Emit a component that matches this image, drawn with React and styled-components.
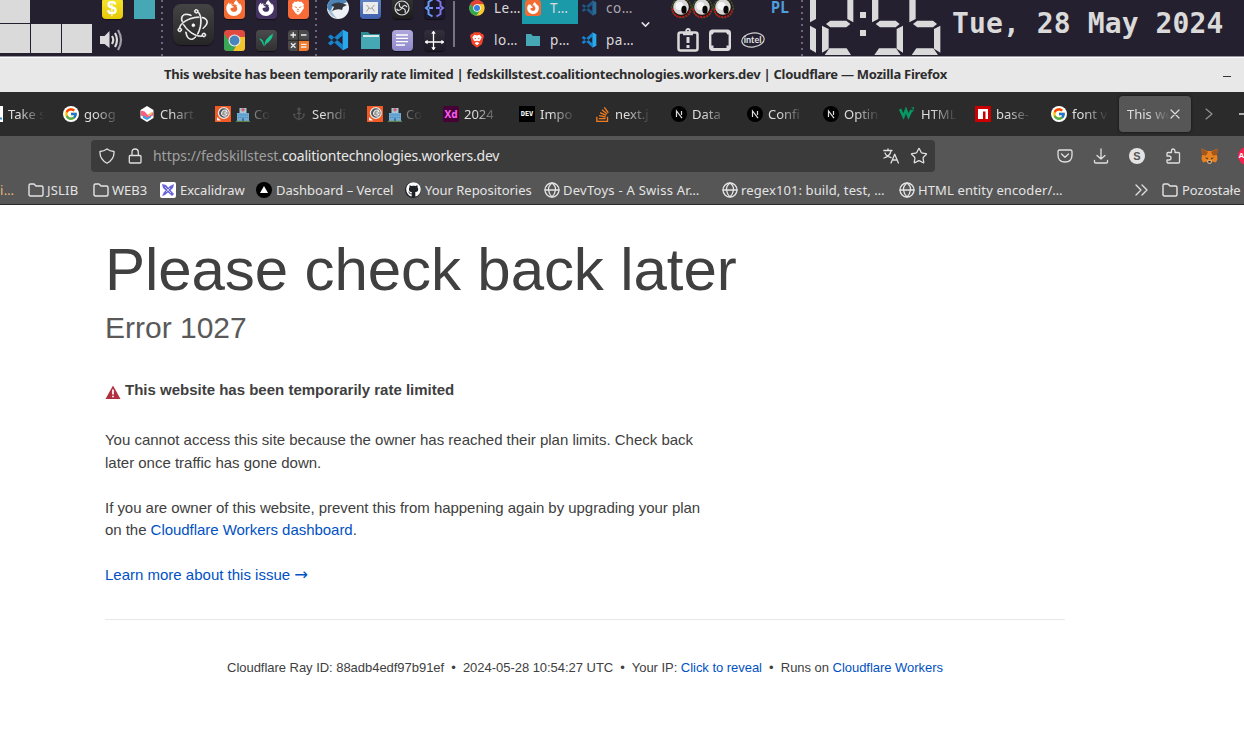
import React from "react";
import styled, { createGlobalStyle, css } from "styled-components";
import { ChevronDown, Anchor, Star } from "lucide-react";
import { FcGoogle } from "react-icons/fc";
import { SiElectron, SiFirefoxbrowser, SiStackoverflow } from "react-icons/si";
import { FaGithub } from "react-icons/fa";

const Global = createGlobalStyle`
  * { box-sizing: border-box; }
  body { margin: 0; background: #fff; overflow: hidden; }
  svg { display: block; flex: none; }
`;

const ui = '"Noto Sans", "Open Sans", sans-serif';

const Screen = styled.div`
  width: 1244px;
  height: 742px;
  overflow: hidden;
  background: #fff;
  font-family: ${ui};
`;

/* ---------- desktop panel ---------- */
const Panel = styled.header`
  display: flex;
  height: 56px;
  overflow: hidden;
  background: #252030;
`;
const Pager = styled.div`
  display: grid;
  grid-template-columns: 30px 30px 30px;
  grid-template-rows: 23px 29px;
  gap: 1px;
  width: 92px;
`;
const Desk = styled.i`
  background: ${(p) => (p.$on ? "#dadada" : "transparent")};
`;
const IconGrid = styled.div`
  display: grid;
  grid-template-columns: repeat(${(p) => p.$cols}, 32px);
  grid-template-rows: 32px 32px;
  place-items: center;
  margin-top: -8px;
  margin-left: ${(p) => p.$left || 0}px;
  height: 64px;
`;
const Grip = styled.i`
  width: 2px;
  height: 56px;
  margin-left: ${(p) => p.$left}px;
  background: repeating-linear-gradient(#6b6776 0 2px, transparent 2px 6px);
`;
const Divider = styled.i`
  width: 2px;
  height: 46px;
  margin: 1px 0 0 3px;
  background: #77737f;
`;
const Tile = styled.span`
  display: grid;
  place-items: center;
  width: ${(p) => p.$s || 21}px;
  height: ${(p) => p.$s || 21}px;
  border-radius: ${(p) => p.$r ?? 4}px;
  background: ${(p) => p.$bg};
  color: ${(p) => p.$c || "#fff"};
  box-shadow: ${(p) => (p.$flat ? "none" : "0 1px 1px #0008")};
  flex: none;
  font: ${(p) => p.$font || `bold 18px "Liberation Sans", sans-serif`};
`;
const Big = styled(Tile)`
  margin: 4px 0 0 10px;
  svg { transform: rotate(12deg); stroke: #fff; stroke-width: 0.5px; }
`;
const Tasks = styled.div`
  display: grid;
  grid-template-columns: repeat(3, 56px);
  grid-template-rows: 24px 32px;
  margin-left: 11px;
`;
const Task = styled.div`
  display: flex;
  align-items: center;
  gap: 9px;
  height: 32px;
  margin-top: ${(p) => (p.$top ? -8 : 0)}px;
  padding-left: 3px;
  background: ${(p) => (p.$active ? "#1b9aaa" : "none")};
  color: ${(p) => (p.$dim ? "#aaa7ad" : "#dadada")};
  font-size: 13.5px;
  letter-spacing: 0.5px;
  white-space: nowrap;
  svg { opacity: ${(p) => (p.$dim ? 0.55 : 1)}; }
`;
const PanelChevron = styled.div`
  display: grid;
  place-items: center;
  width: 22px;
  height: 48px;
  color: #e0e0e0;
`;
const Tray = styled.div`
  display: grid;
  grid-template-rows: 24px 32px;
  width: 132px;
  margin-left: 15px;
`;
const TrayRow = styled.div`
  display: flex;
  align-items: center;
  gap: ${(p) => p.$gap || 0}px;
  padding-left: ${(p) => p.$pad || 0}px;
`;
const Eyes = styled.div`
  display: flex;
  height: 32px;
  margin-top: -8px;
  align-items: center;
`;
const Lang = styled.span`
  margin: -8px 0 0 37px;
  font: bold 15px "DejaVu Sans Mono", monospace;
  color: #4f9fdc;
`;
const DateText = styled.time`
  margin-left: 11px;
  font: bold 28px/48px "DejaVu Sans Mono", monospace;
  letter-spacing: 0.11px;
  color: #dadada;
  white-space: pre;
`;

/* ---------- window title ---------- */
const TitleBar = styled.div`
  display: flex;
  align-items: center;
  height: 36px;
  padding-left: 164px;
  border-top: 1px solid #98949d;
  background: #e8e8e8;
  box-shadow: inset 0 1px #fbfbfb;
  color: #2d2d2d;
  font-size: 13px;
  font-weight: 700;
  white-space: nowrap;
`;
const TitleText = styled.span`
  width: 1059px;
  margin-top: -2px;
  letter-spacing: -0.272px;
`;
const Minimize = styled.i`
  width: 8px;
  height: 1px;
  margin-top: 4px;
  background: #333;
`;

/* ---------- tabs ---------- */
const TabStrip = styled.nav`
  display: flex;
  align-items: center;
  height: 44px;
  overflow: hidden;
  background: #2b2b2b;
  color: #dedede;
  font-size: 13px;
`;
const TabBox = styled.div`
  display: flex;
  align-items: center;
  flex: none;
  width: 76px;
  gap: 5px;
  &:first-child { margin-left: -13px; }
`;
const TabText = styled.span`
  width: ${(p) => p.$w || 35}px;
  margin-left: ${(p) => p.$ml || 0}px;
  overflow: hidden;
  white-space: nowrap;
  opacity: ${(p) => p.$o || 1};
  mask-image: linear-gradient(90deg, #000 ${(p) => p.$solid ?? 30}%, transparent 98%);
`;
const ActiveTab = styled.div`
  display: flex;
  align-items: center;
  flex: none;
  width: 72px;
  height: 36px;
  margin-left: -8px;
  padding-left: 8px;
  border-radius: 4px;
  background: #565656;
  box-shadow: 0 0 3px #0009;
`;
const TabControls = styled.div`
  display: flex;
  align-items: center;
  gap: 24px;
  margin-left: 12px;
  flex: none;
  svg:first-child { opacity: 0.6; }
`;

/* ---------- toolbar ---------- */
const Toolbar = styled.div`
  display: flex;
  align-items: center;
  height: 39px;
  background: #565656;
  color: #e0e0e0;
  overflow: hidden;
`;
const UrlBar = styled.div`
  display: flex;
  align-items: center;
  flex: none;
  width: 844px;
  height: 32px;
  margin-left: 91px;
  padding: 0 7px 0 8px;
  border-radius: 4px;
  background: #3b3b3b;
`;
const Url = styled.span`
  flex: 1;
  margin-left: 1px;
  font-size: 14px;
  letter-spacing: -0.22px;
  color: #e8e8e8;
  white-space: nowrap;
  span { color: #a0a0a0; letter-spacing: -0.03px; }
`;
const Tools = styled.div`
  display: flex;
  align-items: center;
  gap: 20px;
  margin-left: 122px;
`;
const Bookmarks = styled.div`
  display: flex;
  align-items: center;
  height: 30px;
  background: #565656;
  border-bottom: 1px solid #2a2a2a;
  color: #e4e4e4;
  overflow: hidden;
`;
const Mark = styled.div`
  display: flex;
  align-items: center;
  flex: none;
  gap: ${(p) => p.$gap ?? 4}px;
  width: ${(p) => p.$w}px;
  height: 28px;
  white-space: nowrap;
  font-size: 13px;
  letter-spacing: ${(p) => p.$ls || 0}px;
  ${(p) => p.$tint && css`color: #e9b77c;`}
`;

/* ---------- page ---------- */
const Page = styled.main`
  width: 960px;
  margin-left: 105px;
  padding-top: 35px;
  font-family: "Liberation Sans", Arial, sans-serif;
  font-size: 15px;
  line-height: 22.5px;
  color: #404040;
`;
const Headline = styled.h1`
  margin: 0;
  font-size: 60px;
  line-height: 60px;
  font-weight: 400;
  letter-spacing: -0.09px;
`;
const Sub = styled.h2`
  margin: 10px 0 32.5px;
  font-size: 30px;
  line-height: 36px;
  font-weight: 400;
  color: #595959;
`;
const Warning = styled.p`
  display: flex;
  gap: 4px;
  margin: 0;
  font-weight: 700;
  svg { margin-top: 6px; }
`;
const Para = styled.p`
  margin: ${(p) => p.$top || 22.5}px 0 0;
  white-space: nowrap;
  letter-spacing: ${(p) => p.$ls || 0}px;
`;
const Link = styled.a`
  color: #0051c3;
`;
const Arrow = styled.span`
  font-family: "DejaVu Sans", sans-serif;
  font-size: 16.5px;
  line-height: 1;
`;
const Footer = styled.footer`
  margin-top: 32.6px;
  padding-top: 37px;
  border-top: 1px solid #e8e8e8;
  text-align: center;
  font-size: 13px;
  letter-spacing: -0.035px;
  white-space: pre;
`;

/* ---------- drawings ---------- */
const VsCode = ({ s = 21 }) => (
  <svg width={s} height={s} viewBox="0 0 24 24">
    <path d="M17 1V7L4 18 1 15.5ZM17 23V17L4 6 1 8.5Z" fill="#1684cc" />
    <path d="M17 .5 23 3.5V20.5L17 23.5Z" fill="#2aa8ee" />
  </svg>
);
const LION = "M8 1.2 10 2 11.2 1.6 14 4.5 13.4 6 14 8 10.6 13 8 15 5.4 13 2 8 2.6 6 2 4.5 4.8 1.6 6 2Z";
const Lion = ({ s = 16, face = "#f36b32" }) => (
  <svg width={s} height={s} viewBox="0 0 16 16">
    <path d={LION} fill="#fff" />
    <path d="M4 6.2 7 7 6.4 8.2ZM12 6.2 9 7 9.6 8.2ZM7 9.5 8 8.5 9 9.5 8 10.5ZM5.5 10.6 8 12.2 10.5 10.6 8 11.4Z" fill={face} />
  </svg>
);
const BraveShield = () => (
  <svg width="16" height="16" viewBox="0 0 16 16">
    <path d="M5 .3H11L12.4 1.8 14 2 15 4.3 14.4 6 13 12 8 15.8 3 12 1.6 6 1 4.3 2 2 3.6 1.8Z" fill="#f4452a" />
    <path d="M8 3.4 10.5 2.8 12.7 5.2 11.7 7.5 10.4 9.3 8 8.7 5.6 9.3 4.3 7.5 3.3 5.2 5.5 2.8ZM8 9.8 10.4 11.3 8 13.3 5.6 11.3Z" fill="#fff" />
    <path d="M5 5.7 7.2 6.3 6.7 7.3ZM11 5.7 8.8 6.3 9.3 7.3Z" fill="#f4452a" />
  </svg>
);
const Folder = ({ s = 21 }) => (
  <svg width={s} height={s} viewBox="0 0 21 21">
    <path d="M1 2H8L10 4H20V18H1Z" fill="#2f8b94" />
    <path d="M3 5H19V8H3Z" fill="#d7eaea" />
    <path d="M1 7H20V19H1Z" fill="#46a8b5" />
  </svg>
);
const TaskFolder = () => (
  <svg width="16" height="16" viewBox="0 0 16 16">
    <path d="M1 2H6L8 4H15V14H1Z" fill="#46a8b5" />
  </svg>
);
const Chrome = ({ s = 18 }) => (
  <svg width={s} height={s} viewBox="0 0 24 24">
    <circle cx="12" cy="12" r="11.5" fill="#f9cb2e" />
    <path d="M2 6A11.5 11.5 0 0 1 22 6L12 6.5 7 15Z" fill="#e24335" />
    <path d="M2 6A11.5 11.5 0 0 0 11 23.5L17 15 12 17Z" fill="#34a853" />
    <circle cx="12" cy="12" r="5.6" fill="#fff" />
    <circle cx="12" cy="12" r="4.5" fill="#3d7ee0" />
  </svg>
);
const ChromeTile = () => (
  <svg width="21" height="21" viewBox="0 0 21 21">
    <rect width="21" height="21" rx="3.5" fill="#e14b3f" />
    <path d="M12 7H21V17.5Q21 21 17.5 21H9L14 13Z" fill="#f3c52c" />
    <path d="M0 4 7 13 13 14 9 21H3.5Q0 21 0 17.5Z" fill="#3aa757" />
    <circle cx="10.5" cy="10.5" r="6" fill="#eee" />
    <circle cx="10.5" cy="10.5" r="4.9" fill="#4a84bf" />
  </svg>
);
const Speaker = () => (
  <svg width="24" height="24" viewBox="0 0 24 24" fill="none" stroke="#dadada" strokeWidth="2.2">
    <path d="M0 8H4.5L9.5 3V20L4.5 16H0Z" fill="#dadada" stroke="none" />
    <path d="M12 8Q14.5 12 12 16M15 5Q19 12 15 19" />
    <path d="M18 2Q24 12 18 22" stroke="#a09da5" />
  </svg>
);
const Calculator = () => (
  <svg width="21" height="21" viewBox="0 0 21 21">
    <rect width="21" height="21" rx="3.5" fill="#4b4b4b" />
    <path d="M10.5 10.5H21V17.5Q21 21 17.5 21H10.5Z" fill="#f47a2b" />
    <path d="M0 10.3H21M10.3 0V21" stroke="#222" strokeWidth="1" />
    <path d="M2.5 5H8M5.2 2.2V7.8M13 5H18.5M3 13.2 7.5 17.7M7.5 13.2 3 17.7M13 14.3H18.5M13 17H18.5" stroke="#eee" strokeWidth="1.3" />
  </svg>
);
const Leaf = () => (
  <svg width="16" height="16" viewBox="0 0 16 16">
    <path d="M1 6.5Q5 6.5 5.8 11L5.6 14.5Q4 9 1 6.5Z" fill="#18c58f" />
    <path d="M6.3 14.5Q6 7 15 1.5Q14.5 8 8.5 11.5Z" fill="#18c58f" />
  </svg>
);
const Bird = () => (
  <svg width="22" height="22" viewBox="0 0 22 22">
    <circle cx="11" cy="11" r="11" fill="#eef2f6" />
    <path d="M0 11A11 11 0 0 1 20 5L16 7 6 9 3 15Z" fill="#4c83b4" />
    <path d="M4 8Q10 3 20 8L16 10 15 13Q11 11 5 14L7 10Z" fill="#34383e" />
    <path d="M1 14Q4 20 10 21Q5 17 5 13Z" fill="#a9bfd4" />
  </svg>
);
const Envelope = () => (
  <svg width="15" height="12" viewBox="0 0 15 12">
    <rect width="15" height="12" fill="#ececec" />
    <path d="M3.5 3 7.5 7 11.5 3M3.5 9.5 6 6M11.5 9.5 9 6" stroke="#999" fill="none" />
  </svg>
);
const Obs = () => (
  <svg width="16" height="16" viewBox="0 0 16 16" fill="none" stroke="#dedede" strokeWidth="1.2">
    <circle cx="8" cy="8" r="7" />
    <path d="M5.5 3Q4.5 7 8 8Q10 3.5 13 7M8 8Q12.5 9 11 13M8 8Q5 12 2.5 9" />
  </svg>
);
const Braces = () => (
  <svg width="21" height="20" viewBox="0 0 21 20" fill="none" strokeWidth="2">
    <path d="M8.5 1.5 4.5 4V8L2 10 4.5 12V16L8.5 18.5M5 10H9" stroke="#6a9bf5" />
    <path d="M12.5 1.5 16.5 4V8L19 10 16.5 12V16L12.5 18.5M12 10H16" stroke="#7a77ea" />
  </svg>
);
const Lines = () => (
  <svg width="14" height="12" viewBox="0 0 14 12" stroke="#fff" strokeWidth="1.3">
    <path d="M1 1H13M1 4.3H13M1 7.6H13M1 11H10" />
  </svg>
);
const Axes = () => (
  <svg width="19" height="19" viewBox="0 0 19 19" stroke="#fff" strokeWidth="1.3" fill="#fff">
    <path d="M8.5 1V18M1 11H18" />
    <path d="M7.5 2 8.5.5 9.5 2ZM7.5 17 8.5 18.5 9.5 17ZM2 10 .5 11 2 12ZM17 10 18.5 11 17 12Z" />
  </svg>
);
const Eye = () => (
  <svg width="21" height="21" viewBox="0 0 21 21">
    <circle cx="10.5" cy="10" r="9.7" fill="#2a160f" stroke="#3c6728" strokeWidth="1.2" strokeDasharray="2 1" />
    <path d="M1.5 10Q2 19 10 19Q18 19 19.5 11" fill="none" stroke="#bd1424" strokeWidth="1.8" strokeDasharray="2 1" />
    <circle cx="10" cy="9" r="7.8" fill="#d6d6d6" />
    <circle cx="8.5" cy="8" r="4" fill="#f6f6f6" />
    <ellipse cx="13" cy="11.8" rx="2.6" ry="4" fill="#050505" />
  </svg>
);
const Clipboard = () => (
  <svg width="22" height="24" viewBox="0 0 22 24" fill="none" stroke="#dadada" strokeWidth="2.5">
    <rect x="1.5" y="4.5" width="19" height="18" rx="2" />
    <circle cx="11" cy="2.8" r="1.8" strokeWidth="1.8" />
    <path d="M6 6H16" />
    <path d="M11 9V15M11 17V20" strokeWidth="3" />
  </svg>
);
const Frame = () => (
  <svg width="22" height="22" viewBox="0 0 22 22">
    <rect x="1.2" y="1.7" width="19.6" height="19" rx="2.4" fill="none" stroke="#dadada" strokeWidth="2.4" />
    <path d="M2 2H20V5.5H18.5L17 3.5H5L3.5 5.5H2ZM2 20V16.5H4.5V19H17.5V16.5H20V20Z" fill="#dadada" />
  </svg>
);
const Intel = () => (
  <svg width="24" height="18" viewBox="0 0 24 18">
    <ellipse cx="12" cy="9" rx="11.2" ry="7" fill="none" stroke="#cfcfcf" strokeWidth="1.2" transform="rotate(-8 12 9)" />
    <text x="2.8" y="12" fontSize="9" fontWeight="700" fill="#e4e4e4" fontFamily="Lato, sans-serif">intel</text>
  </svg>
);
const Segments = () => (
  <svg width="131" height="56" viewBox="480 0 393 168" style={{ marginLeft: 7 }} fill="#dadada">
    <path d="M480 0H498V57L480 67ZM480 77 498 87V158L480 148Z" />
    <path d="M592 0H610V67L592 57ZM528 72 541 62H589L601 72 589 82H541ZM516 77 536 87V146L516 158ZM538 145H590L603 165H524Z" />
    <path d="M630 36H648V54H630ZM630 90H648V108H630Z" />
    <path d="M666 0H685V57L666 67ZM677 72 690 62H737L749 72 737 82H690ZM740 87 759 77V158L740 146ZM687 145H738L752 165H673Z" />
    <path d="M778 0H797V57L778 67ZM789 72 802 62H849L861 72 849 82H802ZM852 87 871 77V158L852 146ZM799 145H850L864 165H785Z" />
  </svg>
);

const Line = ({ w = 16, h = w, d, sw = 1.3, children }) => (
  <svg width={w} height={h} viewBox={`0 0 ${w} ${h}`} fill="none" stroke="currentColor" strokeWidth={sw} strokeLinecap="round" strokeLinejoin="round">
    <path d={d} />
    {children}
  </svg>
);
const BookFolder = () => <Line w={16} sw={1.4} d="M1 12.5V3.5Q1 2 2.5 2H6L8 4H13.5Q15 4 15 5.5V12.5Q15 14 13.5 14H2.5Q1 14 1 12.5" />;
const Globe = () => (
  <Line w={16} d="M1 8H15M8 1Q4 4 4.5 8T8 15M8 1Q12 4 11.5 8T8 15">
    <circle cx="8" cy="8" r="7" />
  </Line>
);
const Google = () => <Tile $s={16} $r={8} $bg="#fff" $flat><FcGoogle size={14} /></Tile>;
const Github = () => <Tile $s={16} $r={8} $bg="#1f2328" $flat><FaGithub size={15} /></Tile>;
const NextMark = () => (
  <svg width="16" height="16" viewBox="0 0 16 16">
    <circle cx="8" cy="8" r="8" fill="#000" />
    <path d="M5.5 11V5L11 12.2M10.5 5V9" fill="none" stroke="#ddd" strokeWidth="1.2" />
  </svg>
);
const Chart = () => (
  <svg width="16" height="16" viewBox="0 0 16 16">
    <path d="M8 0 14.5 4V12L8 16 1.5 12V4Z" fill="#fff" />
    <path d="M2 5Q5 4 8 8T14 5.5V9.5L8 13 2 9.5Z" fill="#ff5f7e" />
    <path d="M4 9.5Q6 9 8 12L12 9.5V11.5L8 14 4 12Z" fill="#36a2eb" />
    <path d="M9 8.5 13 6V7.5L10 10Z" fill="#ffb24d" />
  </svg>
);
const Coalition = () => (
  <svg width="16" height="16" viewBox="0 0 16 16">
    <rect width="16" height="16" fill="#f15a24" />
    <circle cx="8.8" cy="7" r="5.4" fill="#555" stroke="#e6e6e6" strokeWidth="1.3" />
    <path d="M12 4.2Q7 3.2 6.6 7T11.5 10M9.5 7 12 5V9Z" fill="#ddd" fillOpacity=".5" stroke="#fff" strokeWidth="1" />
    <path d="M2 11V14.5H6Z" fill="#fff" />
  </svg>
);
const Hospital = () => (
  <svg width="14" height="15" viewBox="0 0 14 15">
    <path d="M3.5 1H10.5V14H3.5Z" fill="#a9c6d8" />
    <path d="M1 6H13V14H1Z" fill="#6fabd3" />
    <path d="M2 8H12M2 10.5H12" stroke="#4b8fc4" strokeDasharray="1.5 .7" />
    <path d="M7 1V4.5M5.2 2.8H8.8" stroke="#d95b5b" strokeWidth="1.4" />
    <path d="M6 11.5H8V14H6Z" fill="#3e6c96" />
    <path d="M0 14.3H14" stroke="#6f9857" />
  </svg>
);
const Npm = () => (
  <svg width="16" height="16" viewBox="0 0 16 16">
    <rect width="16" height="16" fill="#c00" />
    <path d="M3 3H13V13H10.5V5.5H8V13H3Z" fill="#fff" />
  </svg>
);
const W3 = () => (
  <svg width="17" height="14" viewBox="0 0 17 14" fill="none" stroke="#059862">
    <path d="M1 2 4.5 9.5 7 3 9.5 9.5 12.5 3" strokeWidth="2.6" />
    <path d="M12.5 .8H15L13.8 2.3Q16 3.3 12.8 4.8" strokeWidth="1" />
  </svg>
);
const Fox = () => (
  <svg width="17" height="16" viewBox="0 0 17 16">
    <path d="M.5.5 6 3H11L16.5.5 16 7 16.5 11 15 14.5 11.5 13.5 10 15.5H7L5.5 13.5 2 14.5.5 11 1 7Z" fill="#e8821e" />
    <path d="M.5.5 7 4 5 7.5 1 7ZM16.5.5 10 4 12 7.5 16 7Z" fill="#a3541f" />
    <path d="M4 9.5 7 10 6.5 11.5ZM13 9.5 10 10 10.5 11.5Z" fill="#263642" />
    <path d="M6 12.5H11L10 15.5H7Z" fill="#d6c5b5" />
    <path d="M7.3 13H9.7V14.6H7.3Z" fill="#222" />
  </svg>
);
const Excalidraw = () => (
  <svg width="16" height="16" viewBox="0 0 16 16">
    <rect width="16" height="16" rx="2" fill="#fff" />
    <path d="M2 2 6 3 14 12 12 14 3 6ZM14 2 13 6 5 13 2 14 4 10 10 4Z" fill="#6965db" />
    <path d="M5 5 11 11M10 6 6 10" stroke="#fff" strokeWidth=".6" />
  </svg>
);
const Vercel = () => (
  <svg width="16" height="16" viewBox="0 0 16 16">
    <circle cx="8" cy="8" r="8" />
    <path d="M8 4 12 11H4Z" fill="#fff" />
  </svg>
);
const ListMark = () => (
  <svg width="16" height="16" viewBox="0 0 16 16">
    <rect width="16" height="16" fill="#fff" />
    <path d="M12.5 12.5H15" stroke="#2f8fd0" strokeWidth="2" />
  </svg>
);
const Translate = () => (
  <Line w={16} sw={1.3} d="M.8 2.5H9M5 .8V2.5M2 5Q4 9 8 9.5M8 2.8Q7 8 1 10M8 15 11.7 6.2 15.4 15M9.3 12H14.2" />
);
const Danger = () => (
  <svg width="16" height="14" viewBox="0 0 16 14">
    <path d="M8 .5 15.5 14H.5Z" fill="#b0303f" />
    <path d="M8 4.5V9.5M8 10.7V12.3" stroke="#fff" strokeWidth="1.7" />
  </svg>
);

const tabs = [
  [<ListMark />, "Take s"],
  [<Google />, "goog"],
  [<Chart />, "Chart."],
  [<Coalition />, "Co", "h"],
  [<Anchor size={14} color="#555" style={{ margin: "0 1px" }} />, "Sendi"],
  [<Coalition />, "Co", "h"],
  [<Tile $s={16} $r={2} $bg="#470137" $c="#ff61f6" $flat $font='bold 10px "Open Sans", sans-serif'>Xd</Tile>, "2024"],
  [<Tile $s={16} $r={0} $bg="#000" $flat $font='bold 7px "DejaVu Sans Mono", monospace'>DEV</Tile>, "Impo"],
  [<SiStackoverflow size={15} color="#ef7d22" />, "next.j"],
  [<NextMark />, "Data"],
  [<NextMark />, "Confi"],
  [<NextMark />, "Optin"],
  [<W3 />, "HTML"],
  [<Npm />, "base-"],
  [<Google />, "font v"],
];

const marks = [
  [28, null, "i…", 0.3, true],
  [65, <BookFolder />, "JSLIB", 0.2, false, 3],
  [67, <BookFolder />, "WEB3", 0, false, 3],
  [96, <Excalidraw />, "Excalidraw"],
  [149, <Vercel />, "Dashboard – Vercel"],
  [139, <Github />, "Your Repositories", -0.02],
  [178, <Globe />, "DevToys - A Swiss Ar…", 0.26, false, 3],
  [177, <Globe />, "regex101: build, test, …", 0.1, false, 3],
  [235, <Globe />, "HTML entity encoder/…", 0.12, false, 3],
  [28, <Line w={16} d="M2 3 7 8 2 13M8 3 13 8 8 13" />, ""],
  [82, <BookFolder />, "Pozostałe", 0, false, 4],
];

const dark = "linear-gradient(#4c4c4c,#303030)";

export default function App() {
  return (
    <Screen>
      <Global />
      <Panel>
        <Pager>
          <Desk $on /><Desk /><Desk />
          <Desk $on /><Desk $on /><Desk $on />
        </Pager>
        <IconGrid $cols={2} $left={4}>
          <Tile $bg="linear-gradient(#f5e52c,#e5c909)">$</Tile>
          <Tile $bg="#46a8b5" $r={0} $flat />
          <Speaker />
        </IconGrid>
        <Grip $left={1} />
        <Big $s={41} $r={8} $bg="linear-gradient(#444,#262626)"><SiElectron size={31} /></Big>
        <IconGrid $cols={3} $left={4}>
          <Tile $bg="#f36b32"><SiFirefoxbrowser size={16} /></Tile>
          <Tile $bg="#443261"><SiFirefoxbrowser size={16} /></Tile>
          <Tile $bg="#f66b38"><Lion /></Tile>
          <ChromeTile />
          <Tile $bg={dark}><Leaf /></Tile>
          <Calculator />
        </IconGrid>
        <Grip $left={1} />
        <IconGrid $cols={4} $left={5}>
          <Bird />
          <Tile $bg="linear-gradient(#6587c4,#405fae)"><Envelope /></Tile>
          <Tile $bg="linear-gradient(#333,#1c1c1c)"><Obs /></Tile>
          <Tile $bg="#1a1829"><Braces /></Tile>
          <VsCode s={22} />
          <Folder />
          <Tile $bg="linear-gradient(#b0a9dd,#8e88ca)"><Lines /></Tile>
          <Tile $bg="linear-gradient(#332f3b,#1d1a25)"><Axes /></Tile>
        </IconGrid>
        <Divider />
        <Tasks>
          <Task $top><Chrome s={16} />Le…</Task>
          <Task $top $active><Tile $s={16} $r={3} $bg="#f36b32" $flat><SiFirefoxbrowser size={12} /></Tile>T…</Task>
          <Task $top $dim><VsCode s={16} />co…</Task>
          <Task><BraveShield />lo…</Task>
          <Task><TaskFolder />p…</Task>
          <Task><VsCode s={16} />pa…</Task>
        </Tasks>
        <PanelChevron><ChevronDown size={13} strokeWidth={2.8} /></PanelChevron>
        <Tray>
          <TrayRow><Eyes><Eye /><Eye /><Eye /></Eyes><Lang>PL</Lang></TrayRow>
          <TrayRow $gap={10} $pad={6}><Clipboard /><Frame /><Intel /></TrayRow>
        </Tray>
        <Grip $left={-2} />
        <Segments />
        <DateText>Tue, 28 May 2024</DateText>
      </Panel>

      <TitleBar>
        <TitleText>This website has been temporarily rate limited | fedskillstest.coalitiontechnologies.workers.dev | Cloudflare — Mozilla Firefox</TitleText>
        <Minimize />
      </TitleBar>

      <TabStrip>
        {tabs.map(([icon, text, extra], i) => (
          <TabBox key={i}>
            {icon}
            {extra && <Hospital />}
            <TabText $ml={extra ? -1 : 0} $w={extra ? 17 : 37} $o={extra ? 0.5 : 1} $solid={extra ? 0 : 30}>{text}</TabText>
          </TabBox>
        ))}
        <ActiveTab>
          <TabText $w={43} $solid={50}>This we</TabText>
          <Line w={10} sw={1.2} d="M1 1 9 9M9 1 1 9" />
        </ActiveTab>
        <TabControls>
          <Line w={12} sw={1.1} d="M3 1 9 6 3 11" />
          <Line w={12} sw={1.3} d="M0 6H12" />
        </TabControls>
      </TabStrip>

      <Toolbar>
        <UrlBar>
          <Line w={16} d="M8 1Q11 3.3 15 3.5Q15.5 11 8 15.2Q.5 11 1 3.5Q5 3.3 8 1" />
          <Line w={37} h={16} d="M14.8 7.5H25Q26 7.5 26 8.5V14Q26 15 25 15H15.3Q14.3 15 14.3 14V8.5Q14.3 7.5 15.3 7.5M17 7V4Q17 1 20.1 1T23.3 4V7" />
          <Url><span>https://fedskillstest.</span>coalitiontechnologies.workers.dev</Url>
          <Translate />
          <Star size={18} strokeWidth={1.7} style={{ marginLeft: 11 }} />
        </UrlBar>
        <Tools>
          <Line w={16} d="M2.5 2H13.5Q15 2 15 3.5V7Q15 14 8 14T1 7V3.5Q1 2 2.5 2M4.5 6 8 9.3 11.5 6" />
          <Line w={16} d="M8 1V11M4 7.5 8 11 12 7.5M1.5 12.5V14Q1.5 15 2.5 15H13.5Q14.5 15 14.5 14V12.5" />
          <Tile $s={16} $r={8} $bg="#e4e4e4" $c="#555" $flat $font='bold 11px "Liberation Sans", sans-serif'>S</Tile>
          <Line w={16} d="M6.5 4.5V3Q6.5 1 8.2 1T10 3V4.5H13.5Q14.5 4.5 14.5 5.5V14Q14.5 15 13.5 15H3Q2 15 2 14V12H4Q6 12 6 10T4 8H2V5.5Q2 4.5 3 4.5Z" />
          <Fox />
          <Tile $s={18} $r={9} $bg="#f4224f" $flat $font='bold 8px "Liberation Sans", sans-serif'>ABP</Tile>
        </Tools>
      </Toolbar>
      <Bookmarks>
        {marks.map(([w, icon, text, ls, tint, gap], i) => (
          <Mark key={i} $w={w} $ls={ls} $tint={tint} $gap={gap}>{icon}{text}</Mark>
        ))}
      </Bookmarks>

      <Page>
        <Headline>Please check back later</Headline>
        <Sub>Error 1027</Sub>
        <Warning><Danger />This website has been temporarily rate limited</Warning>
        <Para $top={28} $ls={-0.01}>
          You cannot access this site because the owner has reached their plan limits. Check back<br />
          later once traffic has gone down.
        </Para>
        <Para $ls={-0.04}>
          If you are owner of this website, prevent this from happening again by upgrading your plan<br />
          on the <Link>Cloudflare Workers dashboard</Link>.
        </Para>
        <Para><Link>Learn more about this issue <Arrow>→</Arrow></Link></Para>
        <Footer>Cloudflare Ray ID: 88adb4edf97b91ef  •  2024-05-28 10:54:27 UTC  •  Your IP: <Link>Click to reveal</Link>  •  Runs on <Link>Cloudflare Workers</Link></Footer>
      </Page>
    </Screen>
  );
}
